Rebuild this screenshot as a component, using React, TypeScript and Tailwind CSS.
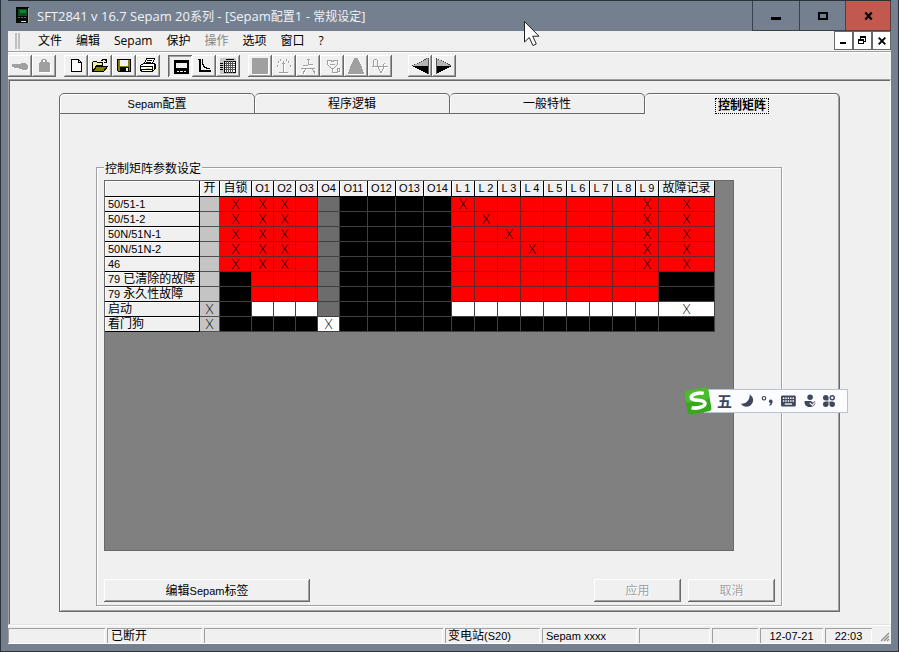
import type { ReactNode } from "react";

const RAISED =
  "shadow-[inset_-1px_-1px_0_#696969,inset_1px_1px_0_#ffffff,inset_-2px_-2px_0_#a0a0a0]";
const SUNKEN =
  "shadow-[inset_1px_1px_0_#696969,inset_-1px_-1px_0_#ffffff,inset_2px_2px_0_#a0a0a0]";

/* Mixed-script text: Latin runs get their own size beside the 12px Chinese. */
function Mixed({ text, latin = "text-[11px]" }: { text: string; latin?: string }) {
  return (
    <>
      {text.split(/([\u4e00-\u9fff]+)/).map((run, i) =>
        i % 2 === 1 ? <span key={i} className="text-[12px]">{run}</span> : run && <span key={i} className={latin}>{run}</span>,
      )}
    </>
  );
}

/* ---------- title bar ---------- */

function TitleBar() {
  return (
    <header className="flex h-[31px] shrink-0 items-stretch border-t border-[#2c323c]">
      <svg className="mt-[6px] ml-2" width="14" height="17" viewBox="0 0 14 17" shapeRendering="crispEdges" aria-hidden="true">
        <rect width="13" height="16" fill="#050805" />
        <rect x="12" y="1" width="1" height="15" fill="#9aa0a8" />
        <rect x="2" y="2" width="9" height="7" fill="#0c4a2a" />
        <rect x="4" y="3" width="6" height="3" fill="#0d8a1c" />
        <path d="M2 10.500h2M5 10.500h2M8 10.500h2" stroke="#129a20" />
        <rect x="5" y="14" width="5" height="1" fill="#e6e07a" />
      </svg>
      <h1 className="ml-[7px] flex-1 self-center text-[12px] leading-4 whitespace-nowrap text-[#f0f3f8]">
        <Mixed text="SFT2841 v 16.7 Sepam 20系列 - [Sepam配置1 - 常规设定]" latin="text-[13px]" />
      </h1>
      <button aria-label="最小化" className="flex w-[47px] items-center justify-center border-b border-l border-[#3a414d]">
        <svg width="10" height="8" viewBox="0 0 10 8" shapeRendering="crispEdges"><rect y="5" width="10" height="3" /></svg>
      </button>
      <button aria-label="最大化" className="flex w-[46px] items-center justify-center border-b border-l border-[#3a414d]">
        <svg width="10" height="8" viewBox="0 0 10 8" shapeRendering="crispEdges"><path d="M0 0h10v8H0zM2 2v4h6V2z" fillRule="evenodd" /></svg>
      </button>
      <button aria-label="关闭" className="flex w-[46px] items-center justify-center border-x border-b border-[#5a3a3c] bg-[#c2594e]">
        <svg width="9" height="8" viewBox="0 0 9 8"><path d="M1.300 .5l6.400 7M7.700 .5l-6.400 7" stroke="#000" strokeWidth="2.200" /></svg>
      </button>
    </header>
  );
}

/* ---------- menu bar ---------- */

const MENUS = ["文件", "编辑", "Sepam", "保护", "操作", "选项", "窗口", "?"];

function MenuBar() {
  return (
    <nav className="flex h-[21px] shrink-0 items-start border-b border-[#a0a0a0]">
      <span className="mt-[2px] ml-[7px] h-4 w-[2px] bg-[#c0c0c0]" />
      <span className="mt-[2px] ml-px h-4 w-[2px] bg-[#c0c0c0]" />
      <div className="ml-[11px] flex flex-1">
        {MENUS.map((m) => (
          <button key={m} disabled={m === "操作"} className="h-5 px-[7px] text-[12px] leading-5 text-black disabled:text-[#858585]">
            {m}
          </button>
        ))}
      </div>
      <div className="flex">
        <button aria-label="最小化子窗口" className="flex h-[19px] w-[19px] items-center justify-center border border-[#696969] bg-white">
          <svg width="9" height="9" viewBox="0 0 9 9" shapeRendering="crispEdges"><rect x="1" y="6" width="6" height="2" /></svg>
        </button>
        <button aria-label="还原子窗口" className="flex h-[19px] w-[19px] items-center justify-center border border-[#696969] bg-white">
          <svg width="9" height="9" viewBox="0 0 9 9" shapeRendering="crispEdges">
            <path d="M2 0h6v6H6V5h1V2H3v1H2zM0 3h6v5H0zM1 5v2h4V5z" fillRule="evenodd" />
          </svg>
        </button>
        <button aria-label="关闭子窗口" className="flex h-[19px] w-[19px] items-center justify-center border border-[#696969] bg-white">
          <svg width="8" height="8" viewBox="0 0 8 8"><path d="M.7 .7l6.600 6.600M7.300 .7L.7 7.300" stroke="#000" strokeWidth="1.900" /></svg>
        </button>
      </div>
    </nav>
  );
}

/* ---------- toolbar ---------- */

function Engraved({ d, filled = false }: { d: string; filled?: boolean }) {
  return (
    <>
      <path d={d} transform="translate(1 1)" fill={filled ? "#fff" : "none"} stroke={filled ? "none" : "#fff"} fillRule="evenodd" />
      <path d={d} fill={filled ? "#a0a0a0" : "none"} stroke={filled ? "none" : "#a0a0a0"} fillRule="evenodd" />
    </>
  );
}

type Tool = { name: string; icon: ReactNode; pressed?: boolean; disabled?: boolean };

const TOOL_GROUPS: Tool[][] = [
  [
    { name: "连接", disabled: true, icon: <Engraved filled d="M4 9h9V8h5v1h1v1h1v4h-1v1h-5v-1h-3v-1H6v-1H4z" /> },
    { name: "断开", disabled: true, icon: <Engraved filled d="M10 4h4v1h1v2h2v1h1v9H7V8h1V7h1V5h1zM11 5v2h2V5z" /> },
  ],
  [
    {
      name: "新建",
      icon: (
        <>
          <path d="M7.500 4.500h7l3 3v9h-10z" fill="#fff" stroke="#000" />
          <path d="M14.500 4.500v3h3" fill="none" stroke="#000" />
        </>
      ),
    },
    {
      name: "打开",
      icon: (
        <>
          <path d="M4.500 16.500v-9l1-1h3l1 1h5v3h-6z" fill="#f4f08a" stroke="#000" />
          <path d="M4.500 16.500l4-5h11l-4 5z" fill="#808000" stroke="#000" />
          <path d="M13 5.500h1v-1h3v1h1v1M18.500 4v4M16 7.500h3" fill="none" stroke="#000" />
        </>
      ),
    },
    {
      name: "保存",
      icon: (
        <>
          <path d="M5.500 4.500h13v12h-12l-1-1z" fill="#808000" stroke="#000" />
          <rect x="8" y="5" width="8" height="6" fill="#f0f0f0" />
          <rect x="8" y="12" width="9" height="4" fill="#000" />
          <rect x="14" y="13" width="2" height="3" fill="#f0f0f0" />
        </>
      ),
    },
    {
      name: "打印",
      icon: (
        <>
          <path d="M8.500 8.500l2-5h8l-2 5z" fill="#fff" stroke="#000" />
          <path d="M11 5.500h5M10 7.500h5" stroke="#000" />
          <path d="M4.500 10.500l3-2h11l1 1v4l-3 3h-11l-1-2z" fill="#fff" stroke="#000" />
          <path d="M4 11.500h12M5 14.500h11M16.500 11v5M18 9v6" stroke="#000" />
          <path d="M10 13.500h4" stroke="#d8d040" />
        </>
      ),
    },
  ],
  [
    {
      name: "面板",
      pressed: true,
      icon: (
        <>
          <rect x="6" y="5" width="15" height="14" />
          <rect x="8" y="8" width="11" height="5" fill="#f0f0f0" />
          <path d="M9 16.500h2M12 16.500h3M16 16.500h2" stroke="#f0f0f0" />
        </>
      ),
    },
    { name: "曲线", icon: <path d="M6 4h3v11h10v2H7V5H6zM10 4h1v5h1v2h1v1h2v1h3v1h-4v-1h-2v-1h-1v-2h-1z" /> },
    {
      name: "矩阵",
      icon: (
        <>
          <rect x="4" y="3" width="16" height="16" fill="#c8c8c8" />
          <rect x="8" y="6" width="12" height="12" fill="#fff" />
          <path d="M4 8.500h3M4 10.500h3M4 12.500h3M4 14.500h3M10 4.500h8" stroke="#000" />
          <path d="M8 6.500h12M8 17.500h12M8.500 6v12M19.500 6v12" stroke="#000" />
          <path d="M9 8.500h10M9 10.500h10M9 12.500h10M9 14.500h10M10.500 6v12M12.500 6v12M14.500 6v12M16.500 6v12" stroke="#555" />
        </>
      ),
    },
  ],
  [
    { name: "停止", disabled: true, icon: <Engraved filled d="M4 3h16v16H4z" /> },
    { name: "测量", disabled: true, icon: <Engraved d="M11.500 6v12M7 17.500h9M10 8.500h3M5.500 10v2M6.500 6v2M8.500 4v2M14.500 4v2M16.500 6v2M18.500 10v2" /> },
    { name: "诊断", disabled: true, icon: <Engraved d="M12.500 4v5M11 4.500h3M7 10.500h5M12 9.500h5M5 13.500h14M9.500 13v2M8.500 15v2M7.500 16v3M16.500 13v2M17.500 15v2M18.500 16v3" /> },
    { name: "维护", disabled: true, icon: <Engraved d="M7.500 5.500h3l2 1 2-1h3v4l-4 4h-2l-4-4zM10 9.500h5M12.500 14v3.500h5v-4h2v3h-2" /> },
    { name: "报警", disabled: true, icon: <Engraved filled d="M10 3h4v2h1v2h1v2h1v2h1v3h1v3h1v2H4v-2h1v-3h1v-3h1V9h1V7h1V5h1z" /> },
    { name: "录波", disabled: true, icon: <Engraved d="M4 11.500h16M5.500 11V6l1-2h2l1 2v5l1 2 2 4h1l2-4v-3l1-2" /> },
  ],
];

const NAV_TOOLS: Tool[] = [
  {
    name: "上一页",
    icon: (
      <>
        <path d="M4 11L20 3v8z" fill="#b4b4b4" />
        <path d="M4 11h16v8z" fill="#000" />
        <path d="M4 11L20 3" stroke="#444" strokeDasharray="1 1" />
        <path d="M20.500 3v16" stroke="#555" />
      </>
    ),
  },
  {
    name: "下一页",
    icon: (
      <>
        <path d="M4 3l16 8H4z" fill="#b4b4b4" />
        <path d="M20 11H4v8z" fill="#000" />
        <path d="M4 3l16 8" stroke="#444" strokeDasharray="1 1" />
        <path d="M4.500 3v16" stroke="#555" />
      </>
    ),
  },
];

function ToolButton({ tool }: { tool: Tool }) {
  return (
    <button aria-label={tool.name} disabled={tool.disabled} className={`h-[22px] w-6 ${tool.pressed ? SUNKEN : RAISED}`}>
      <svg width="24" height="22" viewBox="0 0 24 22" shapeRendering="crispEdges">{tool.icon}</svg>
    </button>
  );
}

function Toolbar() {
  return (
    <div className="flex h-[27px] shrink-0 items-center gap-2 border-t border-white">
      {TOOL_GROUPS.map((group, i) => (
        <div key={i} className="flex">
          {group.map((t) => <ToolButton key={t.name} tool={t} />)}
        </div>
      ))}
      <div className="ml-2 flex">
        {NAV_TOOLS.map((t) => <ToolButton key={t.name} tool={t} />)}
      </div>
    </div>
  );
}

/* ---------- tabs ---------- */

function Tabs() {
  const tab =
    "h-[21px] flex-1 rounded-t-[5px] border-t border-r border-b border-[#696969] text-[12px] leading-5 shadow-[inset_1px_1px_0_#ffffff] first:border-l";
  return (
    <div role="tablist" className="flex">
      <button role="tab" className={tab}><Mixed text="Sepam配置" /></button>
      <button role="tab" className={tab}>程序逻辑</button>
      <button role="tab" className={tab}>一般特性</button>
      <button role="tab" aria-selected="true" className="flex h-[21px] flex-1 items-end justify-center rounded-t-[5px] border-t border-r border-[#696969] text-[12px] font-bold shadow-[inset_1px_1px_0_#ffffff,inset_-1px_0_0_#a0a0a0]">
        <span className="h-4 border border-dotted border-black px-[2px] leading-[15px]">控制矩阵</span>
      </button>
    </div>
  );
}

/* ---------- control matrix ---------- */

/* One letter per cell: r red, R red with a cross, k black, g dark grey,
   c light grey, C light grey with a cross, w white, W white with a cross. */
const ROWS: { label: string; cells: string }[] = [
  { label: "50/51-1", cells: "cRRRrgkkkkRrrrrrrrRR" },
  { label: "50/51-2", cells: "cRRRrgkkkkrRrrrrrrRR" },
  { label: "50N/51N-1", cells: "cRRRrgkkkkrrRrrrrrRR" },
  { label: "50N/51N-2", cells: "cRRRrgkkkkrrrRrrrrRR" },
  { label: "46", cells: "cRRRrgkkkkrrrrrrrrRR" },
  { label: "79 已清除的故障", cells: "ckrrrgkkkkrrrrrrrrrk" },
  { label: "79 永久性故障", cells: "ckrrrgkkkkrrrrrrrrrk" },
  { label: "启动", cells: "CkwwwgkkkkwwwwwwwwwW" },
  { label: "看门狗", cells: "CkkkkWkkkkkkkkkkkkkk" },
];

const COLUMNS: { name: string; width: string }[] = [
  { name: "开", width: "w-[20px]" },
  { name: "自锁", width: "w-[32px]" },
  ...["O1", "O2", "O3", "O4"].map((name) => ({ name, width: "w-[22px]" })),
  ...["O11", "O12", "O13", "O14"].map((name) => ({ name, width: "w-[28px]" })),
  ...[1, 2, 3, 4, 5, 6, 7, 8, 9].map((n) => ({ name: `L ${n}`, width: "w-[23px]" })),
  { name: "故障记录", width: "w-[56px]" },
];

const CELL: Record<string, string> = {
  r: "bg-[#ff0000] border-[#6e2424] text-black",
  k: "bg-black border-[#404040]",
  g: "bg-[#6c6c6c] border-[#404040]",
  c: "bg-[#c4c4c4] border-[#505050] text-black",
  w: "bg-white border-[#404040] text-black",
};

function Matrix() {
  const head =
    "border-r border-b border-black bg-[#f0f0f0] p-0 text-[11px] font-normal whitespace-nowrap text-black shadow-[inset_1px_1px_0_#ffffff]";
  return (
    <table aria-label="控制矩阵" className="w-[610px] table-fixed border-separate border-spacing-0">
      <thead>
        <tr className="h-4">
          <th aria-label="功能" className={`w-[95px] ${head}`} />
          {COLUMNS.map((c) => (
            <th key={c.name} scope="col" className={`h-4 leading-[15px] ${head} ${c.width}`}>
              <Mixed text={c.name} />
            </th>
          ))}
        </tr>
      </thead>
      <tbody>
        {ROWS.map((row) => (
          <tr key={row.label} className="h-[15px]">
            <th scope="row" className={`h-[15px] text-left leading-[14px] ${head}`}>
              <span className="pl-[3px]"><Mixed text={row.label} /></span>
            </th>
            {row.cells.split("").map((c, i) => (
              <td key={i} className={`border-r border-b p-0 text-center font-['Lato'] text-[13px] leading-[14px] font-light ${CELL[c.toLowerCase()]}`}>
                {c !== c.toLowerCase() && "X"}
              </td>
            ))}
          </tr>
        ))}
      </tbody>
    </table>
  );
}

function MatrixPage() {
  const disabledButton = "h-[23px] w-[87px] text-[12px] leading-[22px] text-[#a0a0a0] text-shadow-[1px_1px_0_#ffffff]";
  return (
    <div className="flex flex-1 flex-col border-r border-b border-l border-[#696969] pt-[53px] pr-[57px] pb-[5px] pl-9 shadow-[inset_1px_0_0_#ffffff,inset_-1px_-1px_0_#a0a0a0]">
      <div role="group" aria-labelledby="matrix-title" className="flex flex-1 flex-col items-stretch border border-[#a0a0a0] pr-[6px] pb-[3px] pl-[7px] shadow-[1px_1px_0_#ffffff,inset_1px_1px_0_#ffffff]">
        <h2 id="matrix-title" className="-mt-[7px] self-start bg-[#f0f0f0] px-px text-[12px] leading-4">控制矩阵参数设定</h2>
        <div className="mt-[3px] mr-[41px] flex-1 border border-[#696969] bg-[#808080] pr-[18px]">
          <Matrix />
        </div>
        <div className="mt-7 flex">
          <button className={`h-[23px] w-[206px] text-[12px] leading-[22px] ${RAISED}`}><Mixed text="编辑Sepam标签" /></button>
          <span className="flex-1" />
          <div className="flex gap-[7px]">
            <button disabled className={`${disabledButton} ${RAISED}`}>应用</button>
            <button disabled className={`${disabledButton} ${RAISED}`}>取消</button>
          </div>
        </div>
      </div>
    </div>
  );
}

/* ---------- status bar ---------- */

function StatusBar() {
  const cell =
    "h-[15px] overflow-hidden leading-[17px] whitespace-nowrap shadow-[inset_1px_1px_0_#a0a0a0,inset_-1px_0_0_#ffffff]";
  return (
    <footer className="flex h-[19px] shrink-0 items-end gap-[2px] border-t border-b border-white text-[12px]">
      <span className={`w-[97px] ${cell}`} />
      <span className={`w-[95px] pl-1 ${cell}`}>已断开</span>
      <span className={`flex-1 ${cell}`} />
      <span className={`w-[95px] pl-[3px] ${cell}`}><Mixed text="变电站(S20)" /></span>
      <span className={`w-[95px] pl-1 ${cell}`}><Mixed text="Sepam xxxx" /></span>
      <span className={`w-[71px] ${cell}`} />
      <span className={`w-[46px] ${cell}`} />
      <span className={`w-[63px] text-center ${cell}`}><Mixed text="12-07-21" /></span>
      <span className={`w-[47px] text-center ${cell}`}><Mixed text="22:03" /></span>
      <svg className="ml-[5px]" width="12" height="12" viewBox="0 0 12 12" aria-hidden="true">
        <path d="M2 10L10 2M5 10l5-5M8 10l2-2" stroke="#8c8c8c" strokeWidth="1.300" />
      </svg>
    </footer>
  );
}

/* ---------- floating input-method bar and mouse pointer ---------- */

function InputMethodBar() {
  return (
    <div className="absolute top-[387px] left-[684px] flex items-center text-[#3f475c]">
      <svg className="relative" width="28" height="28" viewBox="0 0 28 28" aria-hidden="true">
        <g transform="rotate(-10 14 14)">
          <rect x="2" y="2" width="24" height="24" rx="3" fill="#35a91c" />
          <rect x="2" y="2" width="24" height="12" rx="3" fill="#4cbc2c" />
          <path d="M21 7.500C17 5.500 7.500 6 8 10c.5 3.500 12 3 12.500 7 .4 4.300-9.500 4.500-14 2.500" fill="none" stroke="#fff" strokeWidth="3.600" />
        </g>
      </svg>
      <div className="-ml-2 flex h-6 w-36 items-center border border-l-0 border-[#b4c4d4] bg-[#fbfcff] pl-[13px]">
        <span className="w-4 text-[15px] leading-5 font-bold">五</span>
        <svg className="ml-2" width="116" height="18" viewBox="0 0 116 18" fill="currentColor" aria-hidden="true">
          <path d="M10.500 2c5 3 5 9.500 0 12.300-3.500 1.800-7.500.7-9.500-2.300 5.500.5 9.800-4 9.500-10z" />
          <circle cx="26" cy="6" r="1.900" fill="none" stroke="currentColor" strokeWidth="1.300" />
          <path d="M31.500 8.500a2 2 0 0 1 3.800 1c0 2.400-1.200 4-3.200 4.700l-.6-1.200c1.200-.5 1.600-1.100 1.600-1.900-1.200.2-2.200-1.200-1.600-2.600z" />
          <path d="M46 3h13a1.500 1.500 0 0 1 1.500 1.500v9a1.500 1.500 0 0 1-1.500 1.500H46a1.500 1.500 0 0 1-1.500-1.500v-9A1.500 1.500 0 0 1 46 3z" />
          <path d="M46.500 6h12M46.500 9h12" stroke="#fff" strokeWidth="1.400" strokeDasharray="1.600 1" />
          <path d="M48.500 12.300h8" stroke="#fff" strokeWidth="1.400" />
          <circle cx="76" cy="5" r="3" />
          <path d="M70 9h7l2 2 2-2 1 1c0 3-3 5.500-6.500 5.500S69.500 13 70 9z" />
          <path d="M75.500 11l3 2.500 4-4" fill="none" stroke="#fff" strokeWidth="1.200" />
          <path d="M93 2.500a3 3 0 0 1 3 3v3h-3a3 3 0 0 1 0-6zM93 15.500a3 3 0 0 0 3-3v-3h-3a3 3 0 0 0 0 6zM100 15.500a3 3 0 0 1-3-3v-3h3a3 3 0 0 1 0 6z" />
          <circle cx="100" cy="5.500" r="2.200" fill="none" stroke="currentColor" strokeWidth="1.500" />
        </svg>
      </div>
    </div>
  );
}

function Pointer() {
  return (
    <svg className="absolute top-[21px] left-[524px]" width="17" height="26" viewBox="0 0 17 26" aria-hidden="true">
      <path d="M.5 .5v20.500l4.800-4.500 3.600 8 3.400-1.500-3.600-7.800H15z" fill="#fff" stroke="#222" />
    </svg>
  );
}

export default function App() {
  return (
    <div className="relative flex min-h-screen flex-col bg-[#748090] text-black">
      <div className="flex flex-1 flex-col border-r border-b border-l border-[#2c323c] px-[7px] pb-[7px] font-['Open_Sans','Noto_Sans_CJK_SC',sans-serif]">
        <TitleBar />
        <div className="flex flex-1 flex-col bg-[#f0f0f0]">
          <MenuBar />
          <Toolbar />
          <div className="flex flex-1 flex-col font-['Liberation_Sans','Noto_Sans_CJK_SC',sans-serif]">
            <main className="flex flex-1 flex-col border border-t-[#a0a0a0] border-r-white border-b-[#e3e3e3] border-l-[#a0a0a0] px-[50px] pt-[13px] pb-3 shadow-[inset_1px_1px_0_#696969]">
              <Tabs />
              <MatrixPage />
            </main>
            <StatusBar />
          </div>
        </div>
      </div>
      <div className="font-['Noto_Sans_CJK_SC',sans-serif]">
        <InputMethodBar />
      </div>
      <Pointer />
    </div>
  );
}
